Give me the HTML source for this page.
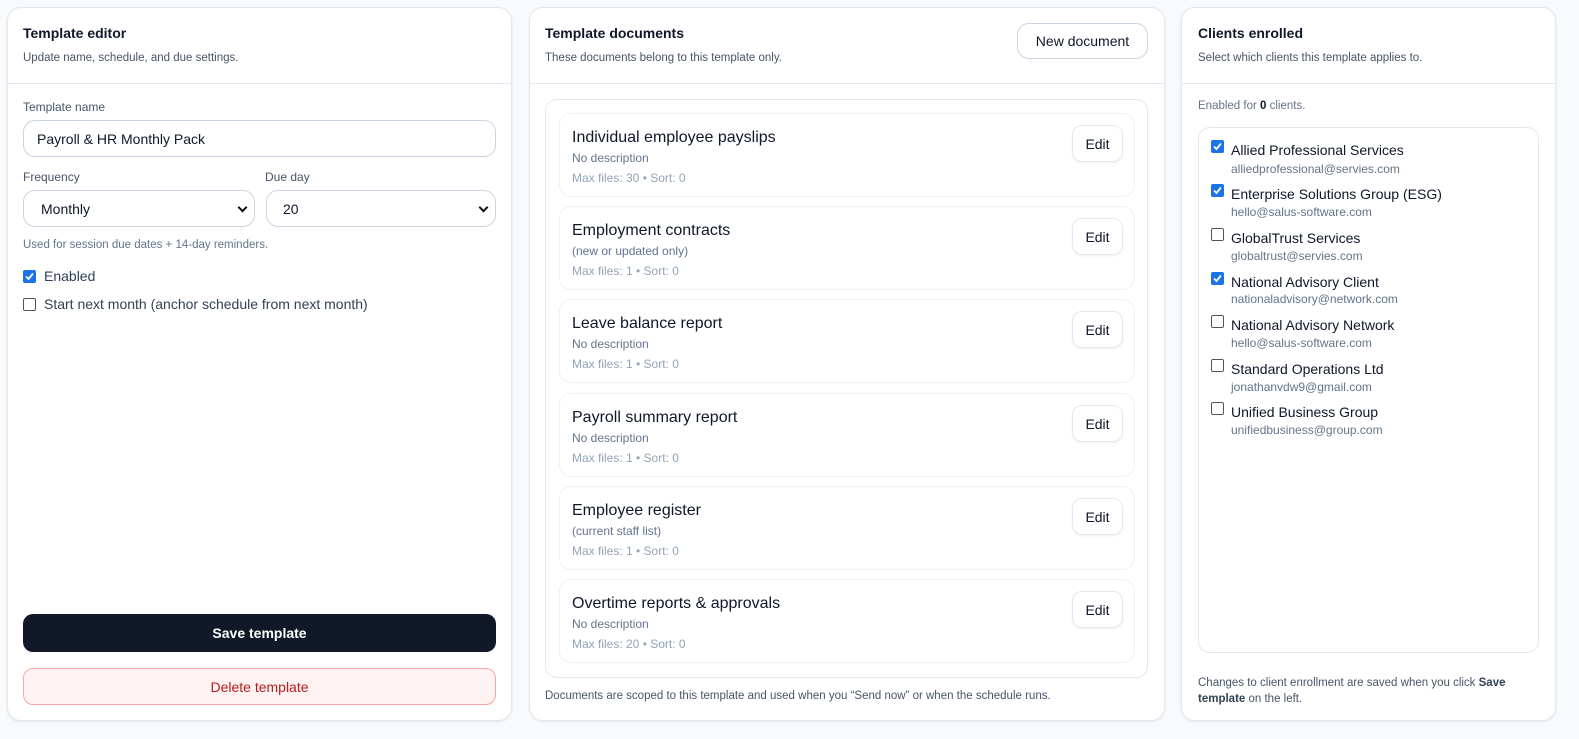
<!DOCTYPE html>
<html><head><meta charset="utf-8"><style>
*{box-sizing:border-box;margin:0;padding:0}
body{width:1579px;height:739px;background:#f8fafc;font-family:"Liberation Sans",sans-serif;color:#0f172a;position:relative;overflow:hidden}
.a{position:absolute;white-space:nowrap}
.card{position:absolute;top:7px;height:714px;background:#fff;border:1px solid #e2e8f0;border-radius:14px;box-shadow:0 1px 3px rgba(15,23,42,.08)}
.hl{position:absolute;left:0;right:0;top:75px;border-top:1px solid #e2e8f0}
.t{font-size:14px;font-weight:bold}
.s{font-size:11.5px;color:#475569}
.lbl{font-size:12px;color:#475569}
.inp{position:absolute;border:1px solid #cbd5e1;border-radius:12px;background:#fff;font-size:14px;display:flex;align-items:center}
.cb{position:absolute;width:13px;height:13px;border:1px solid #555;border-radius:2px;background:#fff}
.cb.on{background:#1a73e8;border-color:#1a73e8}
.cb svg{position:absolute;left:0;top:0}
.doc{position:absolute;left:559px;width:576px;height:84px;border:1px solid #eef2f6;border-radius:12px;background:#fff}
.doc .n{position:absolute;left:12px;top:15px;font-size:16px}
.doc .d{position:absolute;left:12px;top:37px;font-size:12px;color:#64748b}
.doc .m{position:absolute;left:12px;top:57px;font-size:12px;color:#94a3b8}
.edit{position:absolute;left:512px;top:11px;width:51px;height:37px;border:1px solid #e2e8f0;border-radius:10px;font-size:14px;display:flex;align-items:center;justify-content:center;box-shadow:0 1px 2px rgba(0,0,0,.06)}
.cn{position:absolute;left:1231px;font-size:14px}
.ce{position:absolute;left:1231px;font-size:12px;color:#64748b}
.chev{position:absolute;right:8px;top:13px;width:7px;height:7px;border:solid #111;border-width:0 2px 2px 0;transform:rotate(45deg)}
</style></head><body>
<div class="card" style="left:7px;width:505px"><div class="hl"></div></div>
<div class="card" style="left:529px;width:636px"><div class="hl"></div></div>
<div class="card" style="left:1181px;width:375px"><div class="hl"></div></div>

<div class="a t" style="left:23px;top:25px">Template editor</div>
<div class="a s" style="left:23px;top:52px">Update name, schedule, and due settings.</div>
<div class="a lbl" style="left:23px;top:100px">Template name</div>
<div class="inp" style="left:23px;top:120px;width:473px;height:37px;padding-left:13px">Payroll &amp; HR Monthly Pack</div>
<div class="a lbl" style="left:23px;top:170px">Frequency</div>
<div class="a lbl" style="left:265px;top:170px">Due day</div>
<div class="inp" style="left:23px;top:190px;width:232px;height:37px;padding-left:17px">Monthly<span class="chev"></span></div>
<div class="inp" style="left:266px;top:190px;width:230px;height:37px;padding-left:16px">20<span class="chev"></span></div>
<div class="a s" style="left:23px;top:239px;color:#64748b">Used for session due dates + 14-day reminders.</div>
<div class="cb on" style="left:23px;top:270px"><svg width="11" height="11" viewBox="0 0 11 11"><path d="M2 5.5L4.5 8L9 2.5" stroke="#fff" stroke-width="1.8" fill="none"/></svg></div>
<div class="a" style="left:44px;top:268px;font-size:14px;color:#334155">Enabled</div>
<div class="cb" style="left:23px;top:298px"></div>
<div class="a" style="left:44px;top:296px;font-size:14px;color:#334155">Start next month (anchor schedule from next month)</div>
<div class="a" style="left:23px;top:614px;width:473px;height:38px;background:#111827;border-radius:10px;color:#fff;font-size:14px;font-weight:bold;display:flex;align-items:center;justify-content:center">Save template</div>
<div class="a" style="left:23px;top:668px;width:473px;height:37px;background:#fef2f2;border:1px solid #fca5a5;border-radius:10px;color:#b91c1c;font-size:14px;display:flex;align-items:center;justify-content:center">Delete template</div>

<div class="a t" style="left:545px;top:25px">Template documents</div>
<div class="a s" style="left:545px;top:52px">These documents belong to this template only.</div>
<div class="a" style="left:1017px;top:23px;width:131px;height:36px;border:1px solid #cbd5e1;border-radius:12px;font-size:14px;display:flex;align-items:center;justify-content:center">New document</div>
<div class="a" style="left:545px;top:99px;width:603px;height:579px;border:1px solid #e2e8f0;border-radius:12px"></div>
<div class="doc" style="top:113px"><div class="n">Individual employee payslips</div><div class="d">No description</div><div class="m">Max files: 30 • Sort: 0</div><div class="edit">Edit</div></div>
<div class="doc" style="top:206px"><div class="n">Employment contracts</div><div class="d">(new or updated only)</div><div class="m">Max files: 1 • Sort: 0</div><div class="edit">Edit</div></div>
<div class="doc" style="top:299px"><div class="n">Leave balance report</div><div class="d">No description</div><div class="m">Max files: 1 • Sort: 0</div><div class="edit">Edit</div></div>
<div class="doc" style="top:393px"><div class="n">Payroll summary report</div><div class="d">No description</div><div class="m">Max files: 1 • Sort: 0</div><div class="edit">Edit</div></div>
<div class="doc" style="top:486px"><div class="n">Employee register</div><div class="d">(current staff list)</div><div class="m">Max files: 1 • Sort: 0</div><div class="edit">Edit</div></div>
<div class="doc" style="top:579px"><div class="n">Overtime reports &amp; approvals</div><div class="d">No description</div><div class="m">Max files: 20 • Sort: 0</div><div class="edit">Edit</div></div>
<div class="a s" style="left:545px;top:690px">Documents are scoped to this template and used when you “Send now” or when the schedule runs.</div>

<div class="a t" style="left:1198px;top:25px">Clients enrolled</div>
<div class="a s" style="left:1198px;top:52px">Select which clients this template applies to.</div>
<div class="a s" style="left:1198px;top:100px;color:#64748b">Enabled for <b style="color:#0f172a">0</b> clients.</div>
<div class="a" style="left:1198px;top:127px;width:341px;height:526px;border:1px solid #e2e8f0;border-radius:12px"></div>
<div class="cb on" style="left:1211px;top:140px"><svg width="11" height="11" viewBox="0 0 11 11"><path d="M2 5.5L4.5 8L9 2.5" stroke="#fff" stroke-width="1.8" fill="none"/></svg></div><div class="cn" style="top:142px">Allied Professional Services</div><div class="ce" style="top:162px">alliedprofessional@servies.com</div>
<div class="cb on" style="left:1211px;top:184px"><svg width="11" height="11" viewBox="0 0 11 11"><path d="M2 5.5L4.5 8L9 2.5" stroke="#fff" stroke-width="1.8" fill="none"/></svg></div><div class="cn" style="top:186px">Enterprise Solutions Group (ESG)</div><div class="ce" style="top:205px">hello@salus-software.com</div>
<div class="cb" style="left:1211px;top:228px"></div><div class="cn" style="top:230px">GlobalTrust Services</div><div class="ce" style="top:249px">globaltrust@servies.com</div>
<div class="cb on" style="left:1211px;top:272px"><svg width="11" height="11" viewBox="0 0 11 11"><path d="M2 5.5L4.5 8L9 2.5" stroke="#fff" stroke-width="1.8" fill="none"/></svg></div><div class="cn" style="top:274px">National Advisory Client</div><div class="ce" style="top:292px">nationaladvisory@network.com</div>
<div class="cb" style="left:1211px;top:315px"></div><div class="cn" style="top:317px">National Advisory Network</div><div class="ce" style="top:336px">hello@salus-software.com</div>
<div class="cb" style="left:1211px;top:359px"></div><div class="cn" style="top:361px">Standard Operations Ltd</div><div class="ce" style="top:380px">jonathanvdw9@gmail.com</div>
<div class="cb" style="left:1211px;top:402px"></div><div class="cn" style="top:404px">Unified Business Group</div><div class="ce" style="top:423px">unifiedbusiness@group.com</div>
<div class="a s" style="left:1198px;top:675px;line-height:16px;white-space:normal;width:340px">Changes to client enrollment are saved when you click <b style="color:#334155">Save template</b> on the left.</div>
</body></html>
